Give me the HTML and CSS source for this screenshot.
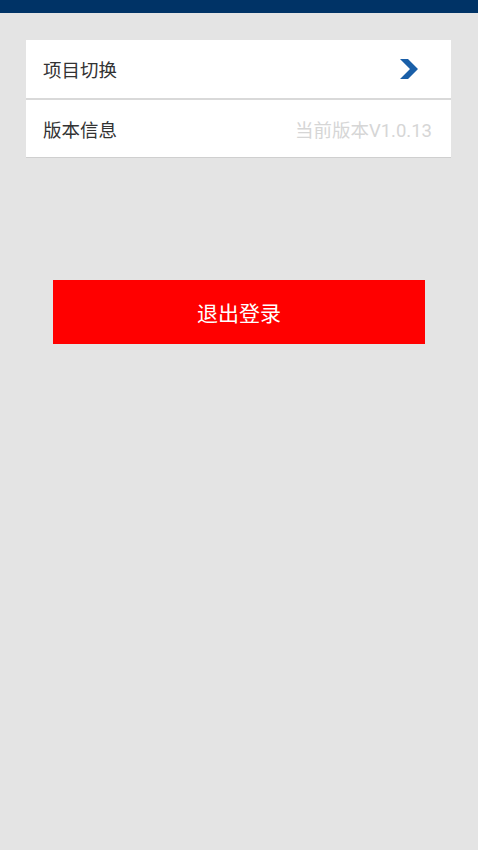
FILE: index.html
```html
<!DOCTYPE html>
<html lang="zh">
<head>
<meta charset="utf-8">
<link rel="stylesheet" href="styles.css">
</head>
<body>
<div class="topbar"></div>
<main class="content">
  <section class="card">
    <div class="row">
      <span class="label">项目切换</span>
      <svg class="chev" width="18" height="20" viewBox="0 0 18 20"><path d="M0 0 H8 L18 10 L8 20 H0 L10 10 Z" fill="#1a5fa8"/></svg>
    </div>
    <div class="row">
      <span class="label">版本信息</span>
      <span class="value">当前版本V1.0.13</span>
    </div>
  </section>
  <button class="logout">退出登录</button>
</main>
</body>
</html>
```
FILE: styles.css
```css
html, body {
  margin: 0;
  padding: 0;
  background: #e4e4e4;
  font-family: Roboto, "Noto Sans CJK SC", sans-serif;
  height: 850px;
}
.topbar {
  height: 13px;
  background: #003366;
}
.content {
  padding: 27px 27px 0 26px;
  display: flex;
  flex-direction: column;
}
.card {
  background: #fff;
  display: flex;
  flex-direction: column;
  box-shadow: 0 1px 0 #cfcfcf;
}
.row {
  height: 58px;
  display: flex;
  align-items: center;
  justify-content: space-between;
  padding: 0 19px 0 17px;
  border-bottom: 2px solid #d9d9d9;
}
.row:last-child {
  border-bottom: none;
  height: 57px;
}
.label {
  font-size: 18.5px;
  color: #333;
}
.chev {
  margin-right: 14px;
  margin-top: -1px;
}
.value {
  font-size: 18.5px;
  color: #d6d6d6;
}
.logout {
  margin: 123px 0 0 27px;
  width: 372px;
  height: 64px;
  background: #ff0000;
  color: #fff;
  border: none;
  font-family: Roboto, "Noto Sans CJK SC", sans-serif;
  font-size: 21px;
  padding: 0;
}
```
